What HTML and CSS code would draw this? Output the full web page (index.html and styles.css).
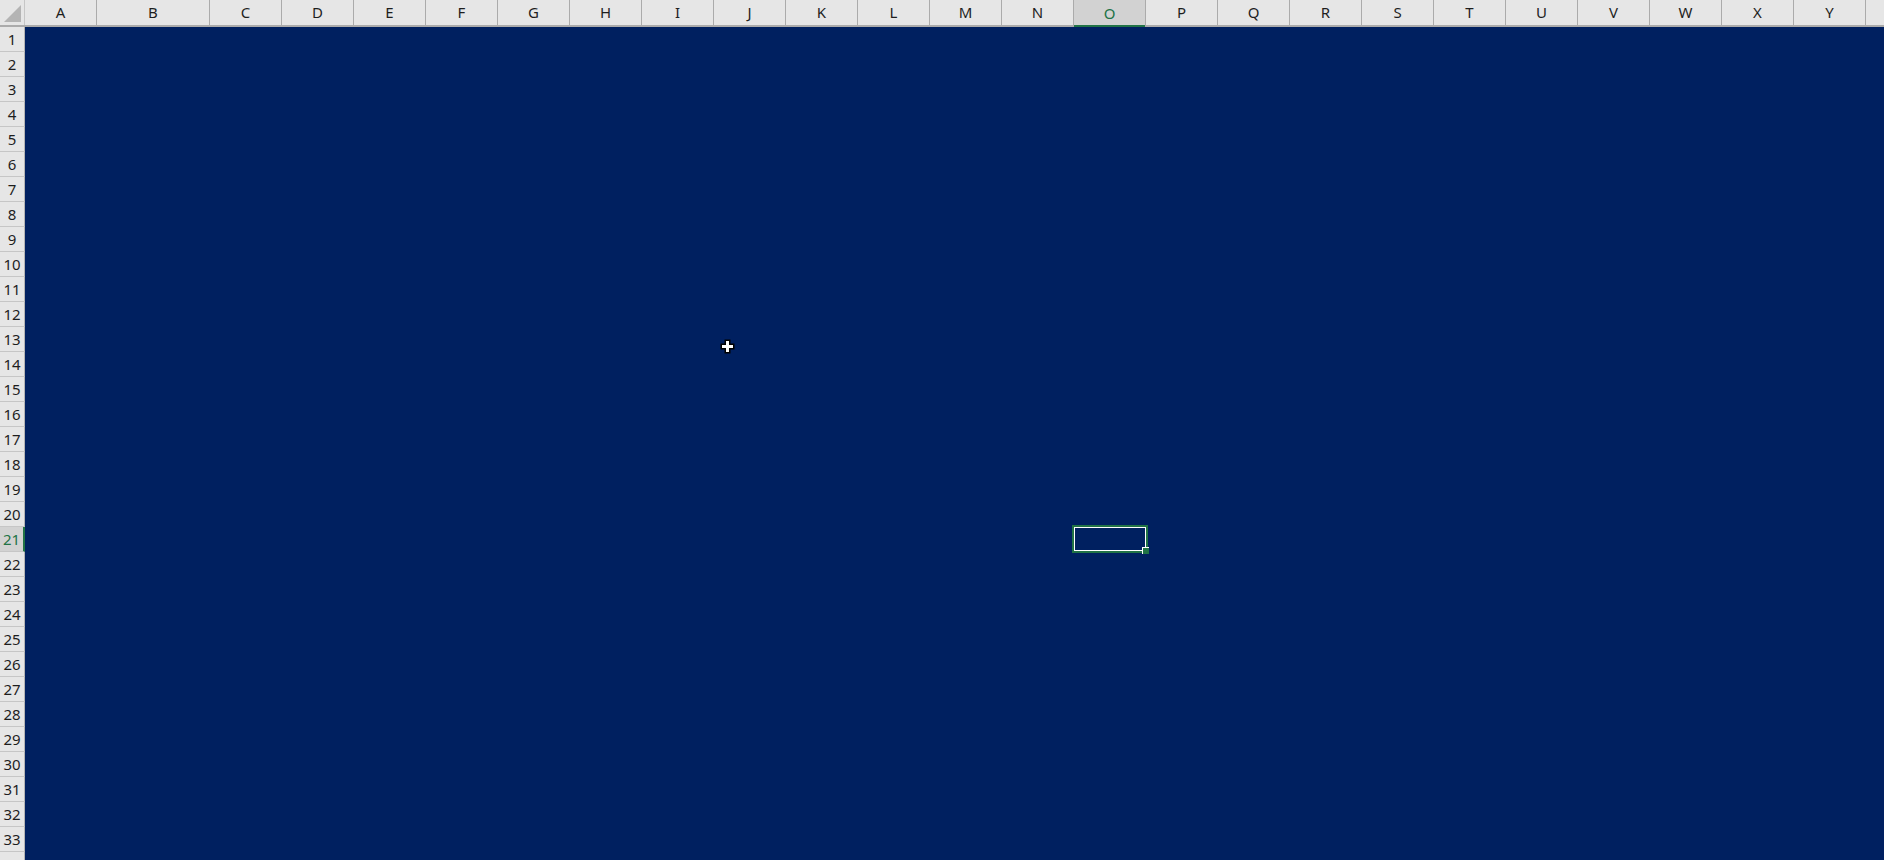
FILE: index.html
```html
<!DOCTYPE html>
<html lang="ja">
<head>
<meta charset="utf-8">
<title>Sheet</title>
<link rel="stylesheet" href="styles.css">
</head>
<body>
<div class="sheet">
  <div class="colheads">
    <div class="corner"><div class="tri"></div></div>
    <div class="ch">A</div>
    <div class="ch wide">B</div>
    <div class="ch">C</div>
    <div class="ch">D</div>
    <div class="ch">E</div>
    <div class="ch">F</div>
    <div class="ch">G</div>
    <div class="ch">H</div>
    <div class="ch">I</div>
    <div class="ch">J</div>
    <div class="ch">K</div>
    <div class="ch">L</div>
    <div class="ch">M</div>
    <div class="ch">N</div>
    <div class="ch active">O</div>
    <div class="ch">P</div>
    <div class="ch">Q</div>
    <div class="ch">R</div>
    <div class="ch">S</div>
    <div class="ch">T</div>
    <div class="ch">U</div>
    <div class="ch">V</div>
    <div class="ch">W</div>
    <div class="ch">X</div>
    <div class="ch">Y</div>
    <div class="ch rest"></div>
  </div>
  <div class="body">
    <div class="rowheads">
      <div class="rh">1</div><div class="rh">2</div><div class="rh">3</div><div class="rh">4</div>
      <div class="rh">5</div><div class="rh">6</div><div class="rh">7</div><div class="rh">8</div>
      <div class="rh">9</div><div class="rh">10</div><div class="rh">11</div><div class="rh">12</div>
      <div class="rh">13</div><div class="rh">14</div><div class="rh">15</div><div class="rh">16</div>
      <div class="rh">17</div><div class="rh">18</div><div class="rh">19</div><div class="rh">20</div>
      <div class="rh active">21</div><div class="rh">22</div><div class="rh">23</div><div class="rh">24</div>
      <div class="rh">25</div><div class="rh">26</div><div class="rh">27</div><div class="rh">28</div>
      <div class="rh">29</div><div class="rh">30</div><div class="rh">31</div><div class="rh">32</div>
      <div class="rh">33</div><div class="rh">34</div>
    </div>
    <div class="cells"></div>
  </div>
  <div class="selection"><span class="handle"></span></div>
  <svg class="cursor" width="15" height="15" viewBox="0 0 15 15">
    <polygon points="4.5,0.5 10.5,0.5 10.5,4.5 14.5,4.5 14.5,10.5 10.5,10.5 10.5,14.5 4.5,14.5 4.5,10.5 0.5,10.5 0.5,4.5 4.5,4.5" fill="#000"/>
    <polygon points="6,2 9,2 9,6 13,6 13,9 9,9 9,13 6,13 6,9 2,9 2,6 6,6" fill="#fff"/>
  </svg>
</div>
</body>
</html>
```
FILE: styles.css
```css
html, body {
  margin: 0;
  padding: 0;
  overflow: hidden;
  background: #002060;
}
.sheet {
  position: relative;
  width: 1884px;
  height: 860px;
  overflow: hidden;
  display: flex;
  flex-direction: column;
  font-family: "Noto Sans", "Noto Sans CJK JP", sans-serif;
  font-size: 15px;
  color: #1e1e1e;
}
.colheads {
  display: flex;
  height: 27px;
  flex: none;
  background: #e6e6e6;
  border-bottom: 2px solid #ababab;
  box-sizing: border-box;
}
.corner {
  width: 25px;
  flex: none;
  box-sizing: border-box;
  border-right: 1px solid #c6c6c6;
  display: flex;
  align-items: flex-end;
  justify-content: flex-end;
  padding: 0 3px 3px 0;
}
.tri {
  width: 0;
  height: 0;
  border-left: 17px solid transparent;
  border-bottom: 17px solid #b4b4b4;
}
.ch {
  width: 72px;
  flex: none;
  box-sizing: border-box;
  border-right: 1px solid #ababab;
  display: flex;
  align-items: center;
  justify-content: center;
  line-height: 1;
  padding-bottom: 1px;
}
.ch.wide { width: 113px; }
.ch.rest { flex: 1; border-right: none; }
.ch.active {
  background: #d2d2d2;
  color: #217346;
  box-shadow: inset 0 -2px 0 #217346;
  margin-bottom: -2px;
  height: 27px;
}
.body {
  flex: 1;
  display: flex;
  min-height: 0;
}
.rowheads {
  width: 25px;
  flex: none;
  background: #e6e6e6;
  display: flex;
  flex-direction: column;
}
.rh {
  height: 25px;
  flex: none;
  box-sizing: border-box;
  border-bottom: 1px solid #c6c6c6;
  border-right: 1px solid #b4b4b4;
  display: flex;
  align-items: center;
  justify-content: center;
  line-height: 1;
}
.rh.active {
  background: #d2d2d2;
  color: #217346;
  border-right: 2px solid #217346;
}
.cells {
  flex: 1;
  background: #002060;
}
.selection {
  position: absolute;
  left: 1072px;
  top: 525px;
  width: 76px;
  height: 28px;
  box-sizing: border-box;
  border: 2px solid #217346;
  box-shadow: inset 0 0 0 1px #ffffff;
}
.handle {
  position: absolute;
  right: -3px;
  bottom: -3px;
  width: 7px;
  height: 7px;
  box-sizing: border-box;
  background: #217346;
  border-left: 1px solid #ffffff;
  border-top: 1px solid #ffffff;
}
.cursor {
  position: absolute;
  left: 720px;
  top: 339px;
}
```
